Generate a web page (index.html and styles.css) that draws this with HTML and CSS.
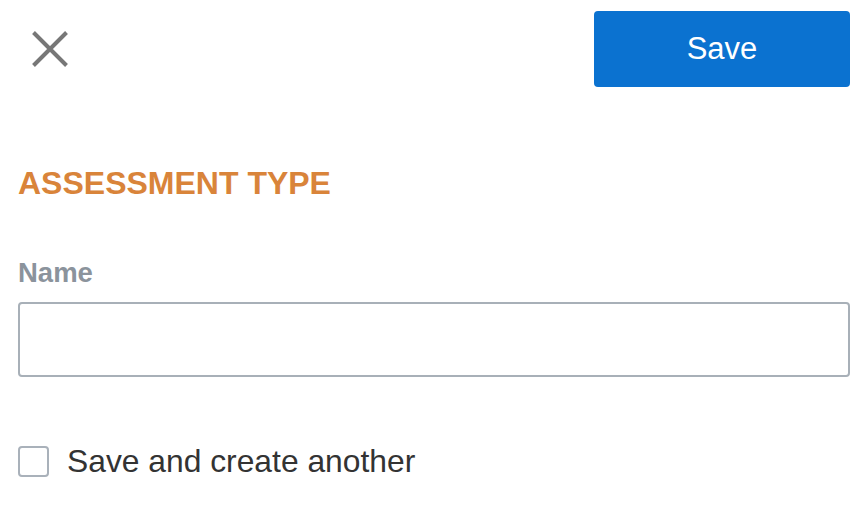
FILE: index.html
```html
<!DOCTYPE html>
<html>
<head>
<meta charset="utf-8">
<link rel="stylesheet" href="styles.css">
</head>
<body>
<div class="page">
  <header class="topbar">
    <button class="close" aria-label="Close">
      <svg width="36" height="36" viewBox="0 0 36 36"><path d="M1.5 1.5 L34.5 34.5 M34.5 1.5 L1.5 34.5" stroke="#777" stroke-width="4" fill="none"/></svg>
    </button>
    <button class="save">Save</button>
  </header>
  <h2 class="heading">ASSESSMENT TYPE</h2>
  <label class="field-label" for="name">Name</label>
  <input class="field" id="name" type="text">
  <label class="check-row">
    <span class="checkbox"></span>
    <span class="check-text">Save and create another</span>
  </label>
</div>
</body>
</html>
```
FILE: styles.css
```css
html, body { margin: 0; padding: 0; background: #fff; }
body { font-family: "Liberation Sans", Arial, sans-serif; }
.page { padding: 11px 16px 0 18px; display: flex; flex-direction: column; }
.topbar { display: flex; justify-content: space-between; align-items: center; height: 76px; }
.close { border: 0; background: none; padding: 0; margin-left: 14px; width: 36px; height: 36px; display: flex; }
.save { width: 256px; height: 76px; background: #0b72d0; color: #fff; border: 0; border-radius: 4px; font-family: inherit; font-size: 31px; padding: 0; }
.heading { margin: 78px 0 0; font-size: 32px; line-height: 36px; font-weight: bold; color: #d9843a; }
.field-label { margin-top: 56px; font-size: 27.5px; line-height: 32px; font-weight: bold; color: #8b939c; }
.field { margin: 13px 0 0; height: 75px; box-sizing: border-box; border: 2px solid #a8b0b8; border-radius: 4px; background: #fff; }
.check-row { margin-top: 66px; display: flex; align-items: center; gap: 18px; }
.checkbox { width: 31px; height: 31px; box-sizing: border-box; border: 2px solid #a9b1ba; border-radius: 4px; }
.check-text { font-size: 31.8px; line-height: 36px; color: #333; }
```
